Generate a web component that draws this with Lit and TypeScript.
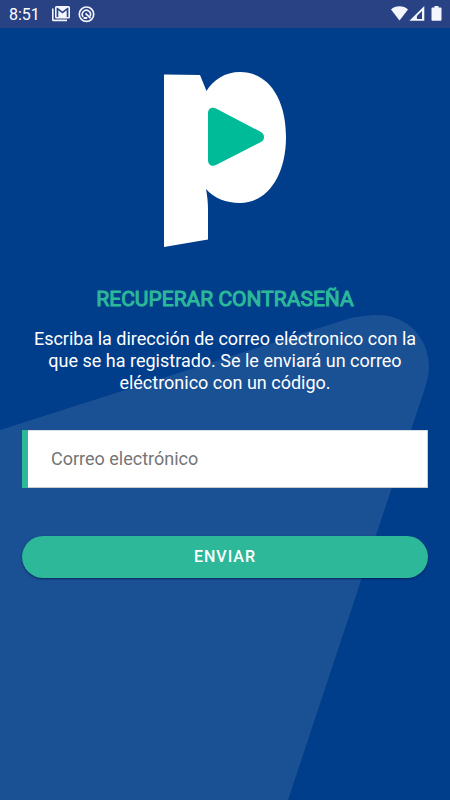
import { LitElement, html, css } from "lit";
import { customElement } from "lit/decorators.js";

@customElement("status-bar")
class StatusBar extends LitElement {
  static styles = css`
    :host {
      display: flex;
      align-items: center;
      justify-content: space-between;
      height: 28px;
      padding: 0 8px 0 9px;
      background: #284283;
      color: #fff;
      font: 16px/28px Roboto, sans-serif;
    }
    .group {
      display: flex;
      align-items: center;
    }
    .time {
      padding-top: 1px;
      margin-right: 12px;
    }
    .notices {
      gap: 8px;
    }
    .system {
      gap: 1px;
    }
    svg {
      display: block;
      fill: #f4f6ff;
    }
  `;

  render() {
    return html`
      <div class="group">
        <span class="time">8:51</span>
        <div class="group notices">
          <svg width="18" height="16" viewBox="0 0 18 16" aria-hidden="true">
            <path d="M0 2.500h1.600v11h13.400v1.700H1.500a1.500 1.500 0 0 1-1.500-1.500z" />
            <path
              fill-rule="evenodd"
              d="M4.500 0h12A1.500 1.500 0 0 1 18 1.500v9.500a1.500 1.500 0 0 1-1.500 1.500h-12A1.500 1.500 0 0 1 3 11v-9.500A1.500 1.500 0 0 1 4.500 0zM4.600 1.700v9.200h1.700V4.200l4.200 3.300L14.700 4.200v6.700h1.700V1.700h-1l-4.900 3.700L5.600 1.700z"
            />
          </svg>
          <svg width="17" height="17" viewBox="0 0 17 17" aria-hidden="true">
            <g fill="none" stroke="#f4f6ff">
              <circle cx="8.500" cy="8.200" r="7.200" stroke-width="1.700" />
              <path d="M5.200 10.900A4.100 4.100 0 1 1 12 10.300" stroke-width="1.600" />
              <path d="M7.500 7.300l5 4.800M5.600 12h3.600" stroke-width="1.800" />
            </g>
          </svg>
        </div>
      </div>
      <div class="group system">
        <svg width="17" height="16" viewBox="0 0 17 16" aria-hidden="true">
          <path d="M8.500 14.500L0 3.500C2.300 1.500 5.200 .3 8.500 .3s6.200 1.200 8.500 3.200z" />
        </svg>
        <svg width="16" height="16" viewBox="0 0 16 16" aria-hidden="true">
          <path fill-rule="evenodd" d="M15.300 0V14.800H.4zM13 5L7.900 10V13h5.100z" />
        </svg>
        <svg width="16" height="16" viewBox="0 0 16 16" aria-hidden="true">
          <path d="M8.500 0h4v1.500h2a1 1 0 0 1 1 1v11.300a1 1 0 0 1-1 1h-8a1 1 0 0 1-1-1V2.500a1 1 0 0 1 1-1H8.500z" />
        </svg>
      </div>
    `;
  }
}

@customElement("app-root")
class AppRoot extends LitElement {
  static styles = css`
    :host {
      display: flex;
      flex-direction: column;
      position: relative;
      overflow: hidden;
      min-height: 100vh;
      background: #003e8c;
      color: #fff;
      font-family: Roboto, sans-serif;
    }
    status-bar,
    main {
      position: relative;
    }
    .backdrop {
      position: absolute;
      top: 0;
      left: 0;
      width: 100%;
      height: 100%;
      fill: #1a5094;
    }
    main {
      display: flex;
      flex-direction: column;
      padding: 44px 22px;
    }
    .logo {
      display: block;
      align-self: center;
      width: 122px;
      height: 176px;
    }
    h1 {
      margin: 39px 0 17px;
      color: #2cb899;
      font-size: 21px;
      line-height: 24px;
      font-weight: 400;
      -webkit-text-stroke: 1px #2cb899;
      text-align: center;
    }
    p {
      margin: 0;
      font-size: 18px;
      line-height: 22px;
      text-align: center;
    }
    form {
      display: flex;
      flex-direction: column;
      gap: 48px;
      margin-top: 36px;
    }
    input {
      box-sizing: border-box;
      width: 100%;
      height: 58px;
      margin: 0;
      padding: 0 22px 2px 23px;
      border: 0;
      border-left: 6px solid #2cb899;
      border-radius: 0;
      outline: none;
      background: #fff;
      box-shadow: inset -1px -1px #c8cad0, inset 0 1px #dcdee4;
      color: #333;
      font: 18px/22px Roboto, sans-serif;
    }
    input::placeholder {
      color: #757575;
      opacity: 1;
    }
    button {
      height: 42px;
      padding: 0;
      border: 0;
      border-radius: 21px;
      background: #2cb899;
      box-shadow: 0 1px 2px rgba(0, 10, 60, 0.6);
      color: #fff;
      font: 500 16px/42px Roboto, sans-serif;
      letter-spacing: 1px;
      cursor: pointer;
    }
  `;

  render() {
    return html`
      <svg class="backdrop" viewBox="0 0 450 800" preserveAspectRatio="xMidYMin slice" aria-hidden="true">
        <path d="M0 430L338 322C352 317 366 315 378 315C408 315 429 339 429 367C429 375 427 382 424 391L288 800H0z" />
      </svg>
      <status-bar></status-bar>
      <main>
        <svg class="logo" viewBox="0 0 122 176" role="img" aria-label="Logo">
          <path
            fill="#fff"
            d="M0 2.500L36 3L42.500 19C49 8 61 0 76 0C104 0 122 26 122 65C122 104 103 131 76 131C62 131 50 126 42 117C43.500 125 44 131 44 138V167.500L0 175z"
          />
          <path
            fill="#00bb98"
            d="M44 41.500C44 36.500 47.500 34.500 52 36.500L97 60C101 62 101 68 97 70L52 93C48 95 44 93 44 88z"
          />
        </svg>
        <h1>RECUPERAR CONTRASEÑA</h1>
        <p>
          Escriba la dirección de correo eléctronico con la que se ha registrado. Se le enviará un correo eléctronico
          con un código.
        </p>
        <form @submit=${(e: Event) => e.preventDefault()}>
          <input type="email" aria-label="Correo electrónico" placeholder="Correo electrónico" />
          <button type="submit">ENVIAR</button>
        </form>
      </main>
    `;
  }
}
